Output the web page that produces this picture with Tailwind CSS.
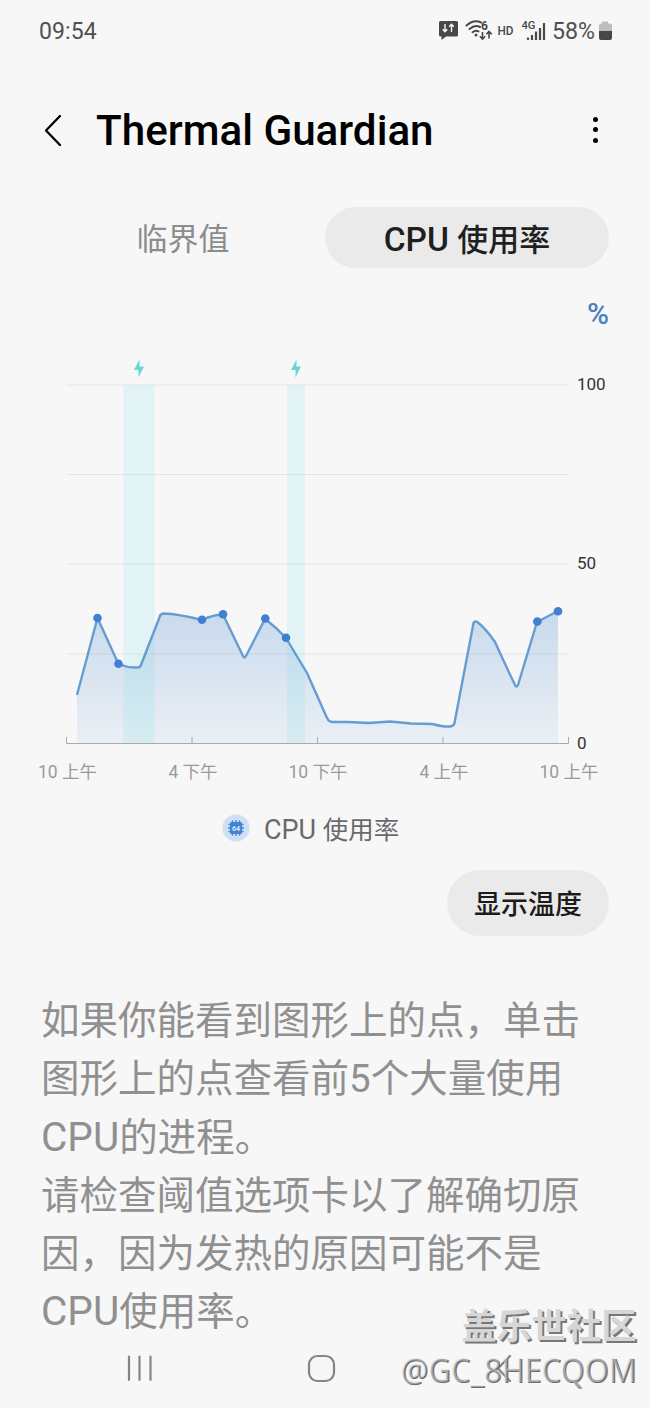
<!DOCTYPE html>
<html lang="zh-CN">
<head>
<meta charset="utf-8">
<title>Thermal Guardian</title>
<script src="https://cdn.jsdelivr.net/npm/@tailwindcss/browser@4"></script>
</head>
<body class="bg-[#f7f7f7]">
<div class="relative flex h-[1408px] w-[650px] flex-col overflow-hidden bg-[#f7f7f7] font-['Roboto','Noto_Sans_CJK_SC',sans-serif]">

  <!-- Status bar -->
  <header class="flex h-[62px] items-center justify-between pr-[37px] pl-[39px] text-[#505050]">
    <span class="text-[23px] leading-none tracking-[0.1px]">09:54</span>
    <svg class="h-[44px] w-[183px]" viewBox="430 10 183 44" fill="none">
      <path d="M440.500 22h16q1.500 0 1.500 1.500v12.500q0 1.500 -1.500 1.500h-10.500l-4.500 3.500v-3.500h-1q-1.500 0 -1.500 -1.500v-12.500q0 -1.500 1.500 -1.500z" fill="#484848"/>
      <path d="M445 25v7.500m-2.300-2.300 2.300 2.500 2.300-2.500M451.500 33v-7.500m-2.300 2.300 2.300-2.500 2.300 2.500" stroke="#f7f7f7" stroke-width="1.400"/>
      <path d="M466.500 26.500q7.500-6.500 14.500-3M469.500 30q5.500-4.500 10.500-2M472.500 33.200q3-2.200 6-.8" stroke="#484848" stroke-width="2" stroke-linecap="round"/>
      <circle cx="476" cy="36" r="1.500" fill="#484848"/>
      <path d="M482.500 33v7m-2.700-2.800 2.700 2.800 2.700-2.800M489 39.500v-7m-2.700 2.800 2.700-2.800 2.700 2.800" stroke="#484848" stroke-width="1.600"/>
      <text x="481" y="30.800" font-size="12" font-weight="700" fill="#484848">6</text>
      <text x="497.500" y="35.500" font-size="12.500" font-weight="500" fill="#484848" textLength="16" lengthAdjust="spacingAndGlyphs">HD</text>
      <text x="521.500" y="30" font-size="11.500" font-weight="500" fill="#484848" textLength="14" lengthAdjust="spacingAndGlyphs">4G</text>
      <circle cx="528" cy="39.700" r="1.300" fill="#484848"/>
      <path d="M532 41v-5M536 41v-8.500M540 41v-12M544 41v-17" stroke="#484848" stroke-width="2.200"/>
      <text x="552" y="39.500" font-size="23.500" fill="#505050" textLength="43" lengthAdjust="spacingAndGlyphs">58%</text>
      <path d="M602 22.500h6v2h2q2 0 2 2v5.500h-13v-5.500q0-2 2-2h1z" fill="#bdbdbd"/>
      <path d="M599 32h13v7q0 2-2 2h-9q-2 0-2-2z" fill="#484848"/>
    </svg>
  </header>

  <!-- Title bar -->
  <div class="mt-[38px] flex h-[62px] items-center pr-[50px] pl-[43px]">
    <svg class="-mt-[2px] h-[34px] w-[22px]" viewBox="0 0 22 34" fill="none"><path d="M17 3 3 17.500l14 14.500" stroke="#000" stroke-width="2.300" stroke-linecap="round" stroke-linejoin="round"/></svg>
    <h1 class="ml-[31px] text-[42.200px] leading-none font-medium whitespace-nowrap text-black">Thermal Guardian</h1>
    <div class="mr-[2px] mb-[3px] ml-auto flex flex-col gap-[5.500px]">
      <i class="size-[5px] rounded-full bg-black"></i><i class="size-[5px] rounded-full bg-black"></i><i class="size-[5px] rounded-full bg-black"></i>
    </div>
  </div>

  <!-- Tabs -->
  <nav class="mt-[45px] flex h-[61px] pr-[41px] pl-[41px] text-[31px]">
    <div class="flex w-[284px] items-center justify-center pt-[5px] text-[#8c8c8c]"><span>临界值</span></div>
    <div class="flex w-[284px] items-center justify-center rounded-full bg-[#eaeaea] pt-[5px] font-medium text-[#1f1f1f]"><span class="leading-none whitespace-nowrap"><span class="text-[33.500px]">CPU </span>使用率</span></div>
  </nav>

  <!-- Usage chart -->
  <svg class="h-[522px] w-[650px] shrink-0" viewBox="0 268 650 522" fill="none">
    <defs>
      <linearGradient id="area" x1="0" y1="610" x2="0" y2="743" gradientUnits="userSpaceOnUse">
        <stop offset="0" stop-color="#4385d0" stop-opacity=".26"/>
        <stop offset="1" stop-color="#4385d0" stop-opacity=".07"/>
      </linearGradient>
    </defs>
    <text x="587" y="323.500" font-size="30" font-weight="500" fill="#4a80bd" textLength="22" lengthAdjust="spacingAndGlyphs">%</text>
    <path d="M66 385h503M66 474.500h503M66 564h503M66 654h503" stroke="#e5e5e5"/>
    <path d="M77 695L97.500 618L118.500 664Q128 668 138 667.500Q140 667.500 141 665L160 616Q161 613.500 164 613.500Q178 614 202 620Q212 615 223 614.500L243 656Q244.500 659 246 656L265 619Q276 627 286 638L307 673L327 718Q329 722 332 722L348 722L369 723L390 721.500L411 723.500L432 724Q444 727 450 726.500Q454 726 454.500 723L473.500 623Q474.500 620 478 622.500Q486 629 495 642Q504 662 515 685Q516.500 688 518 685L537 622L558 611V743H77Z" fill="url(#area)"/>
    <path d="M123.500 385h31v358h-31zM287 385h18v358h-18z" fill="#73dfe8" fill-opacity=".16"/>
    <path d="M77 695L97.500 618L118.500 664Q128 668 138 667.500Q140 667.500 141 665L160 616Q161 613.500 164 613.500Q178 614 202 620Q212 615 223 614.500L243 656Q244.500 659 246 656L265 619Q276 627 286 638L307 673L327 718Q329 722 332 722L348 722L369 723L390 721.500L411 723.500L432 724Q444 727 450 726.500Q454 726 454.500 723L473.500 623Q474.500 620 478 622.500Q486 629 495 642Q504 662 515 685Q516.500 688 518 685L537 622L558 611" stroke="#659dd2" stroke-width="2.400" stroke-linejoin="round"/>
    <g fill="#3f80d6">
      <circle cx="97.500" cy="618" r="4.300"/><circle cx="118.500" cy="663.700" r="4.300"/><circle cx="202" cy="619.700" r="4.300"/><circle cx="223" cy="614.300" r="4.300"/><circle cx="265.300" cy="618.500" r="4.300"/><circle cx="286" cy="637.700" r="4.300"/><circle cx="537.300" cy="621.500" r="4.300"/><circle cx="558" cy="611.200" r="4.300"/>
    </g>
    <path d="M66.500 737v6.500h502V737M192 737v6M317.500 737v6M443 737v6" stroke="#aaa"/>
    <path d="M139.500 359.500v7h4.500l-5.500 11v-7.500h-4.500zM296.500 359.500v7h4.500l-5.500 11v-7.500h-4.500z" fill="#66d8d3"/>
    <g font-size="17" fill="#333"><text x="577" y="390">100</text><text x="577" y="569">50</text><text x="577" y="748.500">0</text></g>
    <g font-size="17.500" fill="#999" text-anchor="middle">
      <text x="67.500" y="777.500">10 上午</text><text x="193" y="777.500">4 下午</text><text x="318" y="777.500">10 下午</text><text x="444" y="777.500">4 上午</text><text x="569" y="777.500">10 上午</text>
    </g>
  </svg>

  <!-- Legend -->
  <div class="mt-[22px] flex h-[34px] items-center gap-[14px] pl-[222px] text-[25.500px] text-[#6a6a6a]">
    <svg class="mb-[2px] size-[28px]" viewBox="0 0 28 28" fill="none">
      <circle cx="14" cy="14" r="13.600" fill="#cfe0f4"/>
      <rect x="8" y="8" width="12" height="12" rx="1.500" fill="#4384d4"/>
      <path d="M10.500 6.500v15M14 6v16M17.500 6.500v15M6.500 10.500h15M6 14h16M6.500 17.500h15" stroke="#4384d4" stroke-width="1.400"/>
      <text x="14" y="16.700" font-size="7" font-weight="700" text-anchor="middle" fill="#dce9f8">64</text>
    </svg>
    <span class="pt-[2px] leading-none whitespace-nowrap"><span class="text-[27px]">CPU </span>使用率</span>
  </div>

  <button class="mt-[24px] mr-[41px] flex h-[66px] w-[162px] items-center justify-center self-end rounded-full bg-[#eaeaea] pt-[4px] text-[27px] font-medium text-[#1c1c1c]"><span>显示温度</span></button>

  <p class="mt-[56px] ml-[41px] text-[38.500px] leading-[58.300px] whitespace-nowrap text-[#909090]">如果你能看到图形上的点，单击<br>图形上的点查看前5个大量使用<br><span class="text-[40.500px] leading-none">CPU</span>的进程。<br>请检查阈值选项卡以了解确切原<br>因，因为发热的原因可能不是<br><span class="text-[40.500px] leading-none">CPU</span>使用率。</p>

  <!-- Navigation bar -->
  <svg class="absolute top-[1340px] left-0 h-[60px] w-[650px]" viewBox="0 1340 650 60" fill="none" stroke="#858585" stroke-width="2.200" stroke-linecap="round">
    <path d="M129 1356.500v23.500M139.500 1356.500v23.500M150.500 1356.500v23.500"/>
    <rect x="309" y="1356" width="25" height="25" rx="8.500"/>
    <path d="M510 1356l-12 12.500l12 12.500"/>
  </svg>

  <!-- Watermark -->
  <svg class="absolute top-[1290px] left-[380px] h-[118px] w-[270px]" viewBox="380 1290 270 118">
    <g font-size="35" font-weight="700">
      <text x="463.500" y="1340.500" fill="#777" textLength="175">盖乐世社区</text>
      <text x="461.500" y="1338.500" fill="#d6d6d6" textLength="175">盖乐世社区</text>
    </g>
    <g font-family="Noto Sans, Noto Sans CJK SC, sans-serif" font-size="32">
      <text x="401.500" y="1383" fill="#6c6c6c" textLength="236" lengthAdjust="spacingAndGlyphs">@GC_8HECQOM</text>
      <text x="400.300" y="1381.800" fill="#dadada" fill-opacity=".5" textLength="236" lengthAdjust="spacingAndGlyphs">@GC_8HECQOM</text>
    </g>
  </svg>
</div>
</body>
</html>
